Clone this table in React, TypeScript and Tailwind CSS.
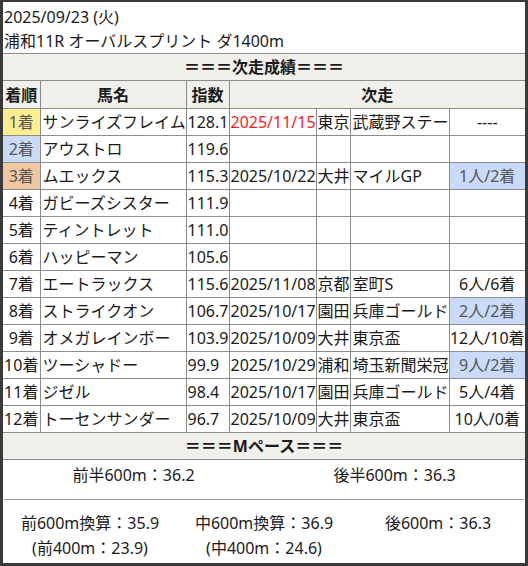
import React from "react";

type Row = {
  rank: string;
  rankBg?: string;
  name: string;
  score: string;
  date?: string;
  dateRed?: boolean;
  venue?: string;
  race?: string;
  result?: string;
  resultBlue?: boolean;
};

const rows: Row[] = [
  { rank: "1着", rankBg: "bg-[#fdee8f]", name: "サンライズフレイム", score: "128.1", date: "2025/11/15", dateRed: true, venue: "東京", race: "武蔵野ステー", result: "----" },
  { rank: "2着", rankBg: "bg-[#c9dbf8]", name: "アウストロ", score: "119.6" },
  { rank: "3着", rankBg: "bg-[#efc8a0]", name: "ムエックス", score: "115.3", date: "2025/10/22", venue: "大井", race: "マイルGP", result: "1人/2着", resultBlue: true },
  { rank: "4着", name: "ガビーズシスター", score: "111.9" },
  { rank: "5着", name: "ティントレット", score: "111.0" },
  { rank: "6着", name: "ハッピーマン", score: "105.6" },
  { rank: "7着", name: "エートラックス", score: "115.6", date: "2025/11/08", venue: "京都", race: "室町S", result: "6人/6着" },
  { rank: "8着", name: "ストライクオン", score: "106.7", date: "2025/10/17", venue: "園田", race: "兵庫ゴールド", result: "2人/2着", resultBlue: true },
  { rank: "9着", name: "オメガレインボー", score: "103.9", date: "2025/10/09", venue: "大井", race: "東京盃", result: "12人/10着" },
  { rank: "10着", name: "ツーシャドー", score: "99.9", date: "2025/10/29", venue: "浦和", race: "埼玉新聞栄冠", result: "9人/2着", resultBlue: true },
  { rank: "11着", name: "ジゼル", score: "98.4", date: "2025/10/17", venue: "園田", race: "兵庫ゴールド", result: "5人/4着" },
  { rank: "12着", name: "トーセンサンダー", score: "96.7", date: "2025/10/09", venue: "大井", race: "東京盃", result: "10人/0着" },
];

const cell = "border border-[#8c8c8c] p-0 overflow-hidden whitespace-nowrap";

export default function App() {
  return (
    <div
      className="w-[528px] h-[566px] bg-white border-x-[3px] border-b-[3px] border-t-[2px] border-[#3a3a3a] text-[16px] text-[#1a1a1a] overflow-hidden"
      style={{ fontFamily: '"Noto Sans", "Noto Sans CJK JP", sans-serif' }}
    >
      <div className="px-[1px] pt-[3px] leading-[24px]">
        <div>2025/09/23 (火)</div>
        <div>浦和11R オーバルスプリント ダ1400m</div>
      </div>

      <table className="w-[522px] table-fixed border-collapse leading-[24px]">
        <colgroup>
          <col className="w-[37px]" />
          <col className="w-[146px]" />
          <col className="w-[43px]" />
          <col className="w-[87px]" />
          <col className="w-[34px]" />
          <col className="w-[99px]" />
          <col className="w-[76px]" />
        </colgroup>
        <tbody>
          <tr className="h-[27px] bg-[#f1f0eb]">
            <td colSpan={7} className={`${cell} border-x-0 text-center font-bold`}>
              ＝＝＝次走成績＝＝＝
            </td>
          </tr>
          <tr className="h-[28px] bg-[#f1f0eb] font-bold">
            <td className={`${cell} border-l-0 text-center`}>着順</td>
            <td className={`${cell} text-center`}>馬名</td>
            <td className={`${cell} text-center`}>指数</td>
            <td colSpan={4} className={`${cell} border-r-0 text-center`}>
              次走
            </td>
          </tr>
          {rows.map((r) => (
            <tr key={r.rank} className="h-[27px]">
              <td className={`${cell} border-l-0 text-center ${r.rankBg ? `${r.rankBg} text-[#555]` : ""}`}>
                {r.rank}
              </td>
              <td className={`${cell} pl-[2px]`}>{r.name}</td>
              <td className={`${cell} pl-[1px]`}>{r.score}</td>
              <td className={`${cell} pl-[1px] ${r.dateRed ? "text-[#ff1a1a]" : ""}`}>{r.date}</td>
              <td className={`${cell} pl-[1px]`}>{r.venue}</td>
              <td className={`${cell} pl-[2px]`}>{r.race}</td>
              <td className={`${cell} border-r-0 text-center ${r.resultBlue ? "bg-[#c9dbf8] text-[#555]" : ""}`}>
                {r.result}
              </td>
            </tr>
          ))}
          <tr className="h-[27px] bg-[#f1f0eb]">
            <td colSpan={7} className={`${cell} border-x-0 text-center font-bold`}>
              ＝＝＝Mペース＝＝＝
            </td>
          </tr>
        </tbody>
      </table>

      <div className="pt-[3px] leading-[24px]">
        <div className="grid grid-cols-2 text-center">
          <div>前半600m：36.2</div>
          <div>後半600m：36.3</div>
        </div>
        <div className="mx-[1px] mt-[12px] border-t border-[#a0a0a0]" />
        <div className="grid grid-cols-3 pt-[11px] text-center leading-[25px]">
          <div>
            <div>前600m換算：35.9</div>
            <div>(前400m：23.9)</div>
          </div>
          <div>
            <div>中600m換算：36.9</div>
            <div>(中400m：24.6)</div>
          </div>
          <div>
            <div>後600m：36.3</div>
          </div>
        </div>
      </div>
    </div>
  );
}
